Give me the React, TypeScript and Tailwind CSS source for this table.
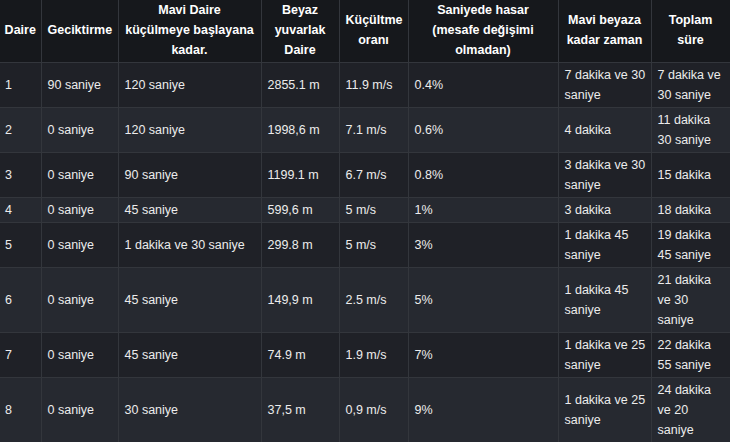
import React from 'react';

const headers = [
  'Daire',
  'Geciktirme',
  'Mavi Daire küçülmeye başlayana kadar.',
  'Beyaz yuvarlak Daire',
  'Küçültme oranı',
  'Saniyede hasar (mesafe değişimi olmadan)',
  'Mavi beyaza kadar zaman',
  'Toplam süre',
];

const widths = [41, 77, 143, 78, 69, 150, 93, 79];

const rows = [
  ['1', '90 saniye', '120 saniye', '2855.1 m', '11.9 m/s', '0.4%', '7 dakika ve 30 saniye', '7 dakika ve 30 saniye'],
  ['2', '0 saniye', '120 saniye', '1998,6 m', '7.1 m/s', '0.6%', '4 dakika', '11 dakika 30 saniye'],
  ['3', '0 saniye', '90 saniye', '1199.1 m', '6.7 m/s', '0.8%', '3 dakika ve 30 saniye', '15 dakika'],
  ['4', '0 saniye', '45 saniye', '599,6 m', '5 m/s', '1%', '3 dakika', '18 dakika'],
  ['5', '0 saniye', '1 dakika ve 30 saniye', '299.8 m', '5 m/s', '3%', '1 dakika 45 saniye', '19 dakika 45 saniye'],
  ['6', '0 saniye', '45 saniye', '149,9 m', '2.5 m/s', '5%', '1 dakika 45 saniye', '21 dakika ve 30 saniye'],
  ['7', '0 saniye', '45 saniye', '74.9 m', '1.9 m/s', '7%', '1 dakika ve 25 saniye', '22 dakika 55 saniye'],
  ['8', '0 saniye', '30 saniye', '37,5 m', '0,9 m/s', '9%', '1 dakika ve 25 saniye', '24 dakika ve 20 saniye'],
];

// padding per column; the "Mavi beyaza" column is tight on the right
const cellPad = (ci: number) =>
  ci === 0 ? 'border-l-0 pl-[5px] pr-[4px]' : ci === 6 ? 'pl-[6px] pr-[2px]' : 'px-[6px]';

export default function App() {
  return (
    <div className="w-[730px] h-[442px] overflow-hidden bg-[#1b1d22] font-['Liberation_Sans',Arial,sans-serif] text-[12.5px] leading-[20px] text-[#ececec]">
      <table className="table-fixed border-collapse w-[730px]">
        <colgroup>
          {widths.map((w, i) => (
            <col key={i} style={{ width: w }} />
          ))}
        </colgroup>
        <thead>
          <tr className="bg-[#16181c]">
            {headers.map((h, i) => (
              <th
                key={i}
                className={`h-[62px] border-x border-b border-[#33363c] pt-0 pb-[2px] text-center align-middle font-bold text-white ${i === 0 ? 'border-l-0 px-[4px]' : 'px-[6px]'}`}
              >
                {h}
              </th>
            ))}
          </tr>
        </thead>
        <tbody>
          {rows.map((r, ri) => (
            <tr key={ri} className={ri % 2 === 0 ? 'bg-[#1f2127]' : 'bg-[#262930]'}>
              {r.map((c, ci) => (
                <td
                  key={ci}
                  className={`border border-[#33363c] py-[2px] text-left align-middle ${cellPad(ci)}`}
                >
                  {c}
                </td>
              ))}
            </tr>
          ))}
        </tbody>
      </table>
    </div>
  );
}
